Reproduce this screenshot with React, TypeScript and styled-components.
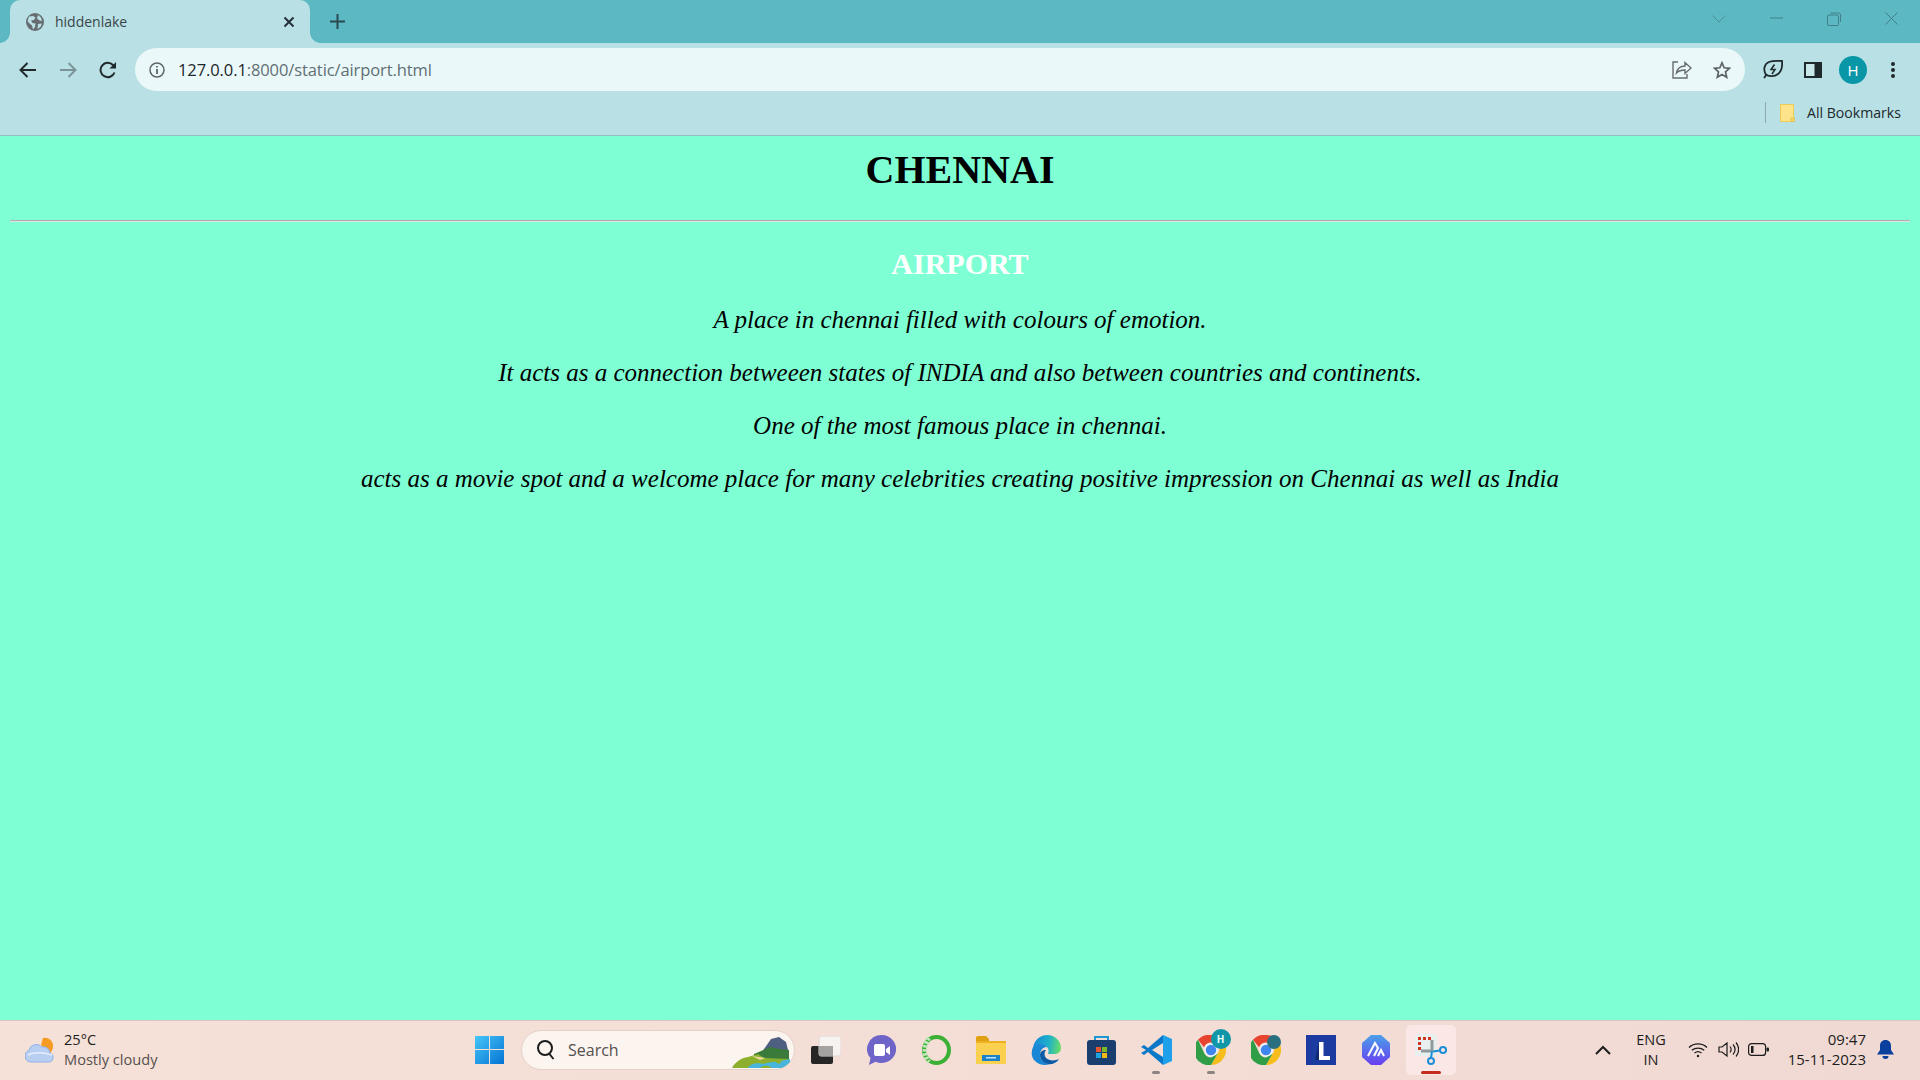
import React from "react";
import styled, { createGlobalStyle } from "styled-components";

const GlobalStyle = createGlobalStyle`
  html, body { margin: 0; padding: 0; height: 100%; overflow: hidden; }
  #root { height: 100%; }
`;

const UI_FONT = `"Open Sans", "Noto Sans", Arial, sans-serif`;

const Screen = styled.div`
  display: flex;
  flex-direction: column;
  width: 1920px;
  height: 1080px;
  font-family: ${UI_FONT};
`;

/* ---------- browser chrome ---------- */
const TabStrip = styled.div`
  display: flex;
  align-items: stretch;
  height: 43px;
  background: #5cb8c2;
`;

const Tab = styled.div`
  position: relative;
  display: flex;
  align-items: center;
  width: 300px;
  margin-left: 10px;
  padding: 0 15px 0 16px;
  box-sizing: border-box;
  background: #b9e1e5;
  border-radius: 10px 10px 0 0;
  &::before, &::after {
    content: "";
    position: absolute;
    bottom: 0;
    width: 10px;
    height: 10px;
  }
  &::before {
    left: -10px;
    background: radial-gradient(circle at 0 0, transparent 9.5px, #b9e1e5 10px);
  }
  &::after {
    right: -10px;
    background: radial-gradient(circle at 100% 0, transparent 9.5px, #b9e1e5 10px);
  }
`;

const TabTitle = styled.span`
  flex: 1;
  margin-left: 11px;
  padding-bottom: 1px;
  font-size: 14px;
  color: #3a4548;
`;

const NewTab = styled.div`
  display: flex;
  align-items: center;
  margin-left: 20px;
`;

const WindowControls = styled.div`
  display: flex;
  margin-left: auto;
`;

const WindowButton = styled.div`
  display: flex;
  align-items: center;
  justify-content: center;
  width: ${(p: { $w?: number }) => p.$w ?? 57}px;
  padding-bottom: 6px;
`;

const Toolbar = styled.div`
  display: flex;
  align-items: center;
  height: 53px;
  padding: 0 9px 0 10px;
  background: #b9e1e5;
`;

const NavButton = styled.div<{ $flush?: boolean }>`
  display: flex;
  align-items: center;
  justify-content: center;
  width: 36px;
  height: 36px;
  margin-right: ${(p) => (p.$flush ? 0 : 4)}px;
`;

const Omnibox = styled.div`
  flex: 1;
  display: flex;
  align-items: center;
  height: 43px;
  margin-left: 5px;
  padding: 0 14px;
  background: #ebf8f9;
  border-radius: 22px;
`;

const Url = styled.div`
  flex: 1;
  margin-left: 13px;
  font-size: 16.5px;
  letter-spacing: -0.1px;
  color: #5f6f73;
  white-space: nowrap;
`;

const UrlHost = styled.span`
  color: #1d2629;
`;

const OmniActions = styled.div`
  display: flex;
  align-items: center;
  gap: 21px;
`;

const ToolbarRight = styled.div`
  display: flex;
  gap: 4px;
  margin-left: 10px;
`;

const Avatar = styled.div`
  display: flex;
  align-items: center;
  justify-content: center;
  width: 28px;
  height: 28px;
  border-radius: 50%;
  background: #0997a8;
  color: #fff;
  font-size: 15px;
`;

const BookmarkBar = styled.div`
  display: flex;
  align-items: center;
  justify-content: flex-end;
  height: 40px;
  padding: 0 19px 6px 0;
  box-sizing: border-box;
  background: #b9e1e5;
  border-bottom: 1px solid #95bcc4;
  color: #20282b;
  font-size: 14.1px;
`;

const BarDivider = styled.div`
  width: 1px;
  height: 21px;
  margin-right: 14px;
  background: #8fa9ae;
`;

const BookmarkLabel = styled.span`
  margin-left: 12px;
`;

/* ---------- page ---------- */
const Page = styled.main`
  flex: 1;
  padding: 11px 10px 0;
  background: #7fffd4;
  font-family: "Liberation Serif", "Times New Roman", serif;
  text-align: center;
  color: #000;
`;

const Title = styled.h1`
  margin: 0 0 27px;
  font-size: 40px;
  font-weight: bold;
  line-height: 46px;
`;

const Rule = styled.hr`
  margin: 0;
  height: 0;
  border: 0;
  border-top: 1px solid #b5a9ab;
  border-bottom: 1px solid #d5e8dd;
`;

const Subtitle = styled.h2`
  margin: 25px 0;
  font-size: 30px;
  font-weight: bold;
  line-height: 34px;
  color: #fff;
`;

const Line = styled.p`
  margin: 25px 0;
  font-size: 25px;
  font-style: italic;
  line-height: 28px;
`;

/* ---------- taskbar ---------- */
const Taskbar = styled.footer`
  display: flex;
  align-items: center;
  height: 60px;
  padding-bottom: 2px;
  box-sizing: border-box;
  border-top: 1px solid #d8c8c0;
  background: linear-gradient(90deg, #f6e1d8 0%, #f3ddd5 60%, #f0d9d3 100%);
  color: #1d1d1d;
`;

const Weather = styled.div`
  display: flex;
  align-items: center;
  width: 466px;
  padding-left: 25px;
  box-sizing: border-box;
`;

const WeatherText = styled.div`
  margin: 0 0 2px 9px;
  font-size: 14.6px;
  line-height: 20px;
`;

const WeatherNote = styled.div`
  color: #55504e;
`;

const StartCell = styled.div`
  display: flex;
  justify-content: center;
  width: 46px;
`;

const SearchBox = styled.div`
  position: relative;
  display: flex;
  align-items: center;
  width: 274px;
  height: 40px;
  margin-left: 9px;
  padding-left: 14px;
  box-sizing: border-box;
  background: #fbf4ef;
  border: 1px solid #e3d1ca;
  border-radius: 20px;
  overflow: hidden;
  color: #55504e;
  font-size: 16px;
`;

const SearchLabel = styled.span`
  margin-left: 12px;
`;

const SearchArt = styled.svg`
  position: absolute;
  right: 2px;
  bottom: 1px;
`;

const Apps = styled.div`
  display: flex;
  margin-left: 3.5px;
`;

const AppCell = styled.div<{ $active?: boolean; $dot?: boolean }>`
  position: relative;
  display: flex;
  align-items: center;
  justify-content: center;
  width: 55px;
  height: 50px;
  ${(p) => p.$active && `
    width: 50px;
    margin: 0 2.5px;
    background: #fbe7e5;
    border-radius: 5px;
  `}
  &::after {
    content: "";
    position: absolute;
    bottom: 1px;
    left: 50%;
    display: ${(p) => (p.$active || p.$dot ? "block" : "none")};
    width: ${(p) => (p.$active ? 20 : 8)}px;
    height: 3px;
    border-radius: 2px;
    transform: translateX(-50%);
    background: ${(p) => (p.$active ? "#c42b1c" : "#8a8583")};
  }
`;

const ChromeBadge = styled.span<{ $globe?: boolean }>`
  position: absolute;
  top: ${(p) => (p.$globe ? 10 : 4)}px;
  right: ${(p) => (p.$globe ? 13 : 8)}px;
  display: flex;
  align-items: center;
  justify-content: center;
  width: ${(p) => (p.$globe ? 14 : 20)}px;
  height: ${(p) => (p.$globe ? 14 : 20)}px;
  border-radius: 50%;
  background: ${(p) => (p.$globe ? "#2a6f80" : "#0f97a8")};
  color: #e8ffff;
  font-size: 10px;
  font-weight: 700;
`;

const Tray = styled.div`
  display: flex;
  align-items: center;
  margin-left: auto;
  padding-right: 19px;
`;

const TrayCell = styled.div<{ $w: number }>`
  display: flex;
  align-items: center;
  justify-content: center;
  width: ${(p) => p.$w}px;
`;

const Lang = styled.div`
  width: 50px;
  margin-left: 5px;
  margin-right: 7px;
  text-align: center;
  font-size: 14.5px;
  line-height: 20px;
`;

const Clock = styled.div`
  width: 93px;
  margin: 0 4px 2px 0;
  text-align: right;
  font-size: 15px;
  line-height: 20px;
  white-space: nowrap;
`;

/* ---------- drawings ---------- */
const Globe = () => (
  <svg width="18" height="18" viewBox="0 0 18 18">
    <circle cx="9" cy="9" r="9" fill="#676c70" />
    <path d="M3 3.500 7 3l2.500 1.500L8 7 5 7.500 6.500 10l3 .5L9 14l-2 2.500-1-4-3-2.500-1.500-2zM12 2l3 2.500L16 8l-2.500-.5L11 5.500zM12 11l4-.5-1.500 3.500-3 2z" fill="#b9e1e5" />
  </svg>
);

const Stroke = ({ w, h, d, c, sw = 2 }: { w: number; h: number; d: string; c: string; sw?: number }) => (
  <svg width={w} height={h} viewBox={`0 0 ${w} ${h}`} fill="none" stroke={c} strokeWidth={sw}>
    <path d={d} />
  </svg>
);

const ChromeLogo = ({ size = 30 }: { size?: number }) => (
  <svg width={size} height={size} viewBox="0 0 30 30">
    <path d="M15 0a15 15 0 0 1 13 7.500H15a7.500 7.500 0 0 0-7 4.800L2 4.800A15 15 0 0 1 15 0z" fill="#e8432f" />
    <path d="M28 7.500A15 15 0 0 1 15 30l6.500-11.200A7.500 7.500 0 0 0 20 7.500z" fill="#f7bd1c" />
    <path d="M15 30A15 15 0 0 1 2 4.800l6.500 14A7.500 7.500 0 0 0 15 22.500l6.500-3.700z" fill="#2f9e47" />
    <circle cx="15" cy="15" r="6" fill="#3f86ee" stroke="#f0f4f6" strokeWidth="1.500" />
  </svg>
);

const Icons = {
  start: (
    <svg width="29" height="29" viewBox="0 0 29 29">
      <defs>
        <linearGradient id="win" x1="0" y1="0" x2="1" y2="1">
          <stop offset="0" stopColor="#45c6f7" />
          <stop offset="1" stopColor="#0573d4" />
        </linearGradient>
      </defs>
      <path d="M0 1h14v13H0zM15 1h14v13H15zM0 15h14v14H0zM15 15h14v14H15z" fill="url(#win)" />
    </svg>
  ),
  weather: (
    <svg width="30" height="26" viewBox="0 0 30 26">
      <path d="M18 1a8 8 0 0 1 10 8c0 3-1 5-3 7l-9-8z" fill="#f59b23" />
      <path d="M6 25a6 6 0 0 1-2-11.600A7.500 7.500 0 0 1 17 10a6.500 6.500 0 0 1 8 6 4.800 4.800 0 0 1 0 9z" fill="#b9cff2" stroke="#8fb1e6" />
      <path d="M3 18c6-3 14-3 24 0" fill="none" stroke="#e5edfb" strokeWidth="1.500" />
    </svg>
  ),
  search: (
    <svg width="20" height="22" viewBox="0 0 20 22" fill="none" stroke="#1c1c1c" strokeWidth="2">
      <circle cx="9" cy="9" r="7" />
      <path d="m13.500 15 4 5" />
    </svg>
  ),
  landscape: (
    <SearchArt width="62" height="32" viewBox="0 0 62 32">
      <path d="M32 16 41 3l8-2 7 5 3 12z" fill="#4f5f80" />
      <path d="M24 18 40 11l10 2 9 1v10H24z" fill="#3a7a3a" />
      <path d="M2 32c3-6 9-10 16-11l10-3 6 4 26 1v9z" fill="#8cb02e" />
      <path d="M22 20l14 2-6 2z" fill="#e9d9a0" />
      <path d="M18 32c2-4 8-6 16-4 4-2 14-2 26-5v9z" fill="#47b5dd" />
      <path d="M30 32c3-3 8-3 12 0zM44 25h8l-3 3z" fill="#8cb02e" />
    </SearchArt>
  ),
  taskview: (
    <svg width="30" height="28" viewBox="0 0 30 28">
      <rect x="0" y="10" width="22" height="18" rx="2" fill="#262626" />
      <rect x="8" y="0" width="22" height="20" rx="2" fill="#f6f3f1" stroke="#ded7d3" />
      <rect x="8" y="10" width="14" height="10" fill="#a5a3a2" />
    </svg>
  ),
  chat: (
    <svg width="29" height="30" viewBox="0 0 29 30">
      <path d="M14.500 0a14.500 14 0 1 1-6 26.700L2 30l1.500-7A14.500 14 0 0 1 14.500 0z" fill="#6f64c8" />
      <rect x="7" y="9" width="11" height="12" rx="2" fill="#fff" />
      <path d="m19 14 4-3v9l-4-3z" fill="#fff" />
    </svg>
  ),
  ring: (
    <svg width="31" height="30" viewBox="0 0 31 30" fill="none">
      <ellipse cx="15.500" cy="15" rx="12.500" ry="13" stroke="#3cb034" strokeWidth="4" />
      <path d="M8 3C3 9 2 20 8 27" stroke="#c4e6bd" strokeWidth="4.500" strokeDasharray="2.500 1.500" />
    </svg>
  ),
  folder: (
    <svg width="30" height="28" viewBox="0 0 30 28">
      <path d="M0 2a2 2 0 0 1 2-2h8l3 3h0v4H0z" fill="#e0a010" />
      <path d="M0 5h30v23H0z" fill="#fbd04e" />
      <path d="M0 5h30v2H0z" fill="#eab120" />
      <path d="M6 19h18v6H6z" fill="#1a82c9" />
      <path d="M10 21h10v1.500H10z" fill="#bfe3f5" />
    </svg>
  ),
  edge: (
    <svg width="30" height="30" viewBox="0 0 30 30">
      <defs>
        <linearGradient id="edgeTop" x1="0" y1="0.500" x2="1" y2="0.600">
          <stop offset="0" stopColor="#1288d8" />
          <stop offset="0.550" stopColor="#1fb2c8" />
          <stop offset="1" stopColor="#6bdc66" />
        </linearGradient>
      </defs>
      <path d="M2 12C4 4 10 0 16 0c8 0 14 6 14 13 0 4-3 6-7 6h-6c2-5-1-8-5-9-4-1-8 0-10 2z" fill="url(#edgeTop)" />
      <path d="M2 12c-2 5-2 10 2 14 4 4 10 5 15 3-4 0-10-3-10-9 0-5 3-8 7-8-4-4-11-4-14 0z" fill="#1a86d6" />
      <path d="M9 20c0 6 6 10 12 9 3-1 5-2 7-5-4 2-10 2-13-1-2-2-2-6 0-8-4 0-6 2-6 5z" fill="#0b5aa5" />
    </svg>
  ),
  store: (
    <svg width="29" height="30" viewBox="0 0 29 30">
      <path d="M8 6V2h13v4" fill="none" stroke="#1d9ad6" strokeWidth="2" />
      <rect x="0" y="5" width="29" height="25" rx="3" fill="#1a3f6f" />
      <rect x="9" y="12" width="5" height="5" fill="#e8552d" />
      <rect x="15" y="12" width="5" height="5" fill="#7bb82a" />
      <rect x="9" y="18" width="5" height="5" fill="#1fa3e0" />
      <rect x="15" y="18" width="5" height="5" fill="#f7b917" />
    </svg>
  ),
  vscode: (
    <svg width="31" height="30" viewBox="0 0 31 30">
      <path d="M22 0 31 4v22l-9 4z" fill="#1fa0ea" />
      <path d="M22 0v8L11 15l11 7v8L7 17l-4 3-3-2 5-3-5-3 3-2 4 3z" fill="#0a78c8" />
    </svg>
  ),
  l: (
    <svg width="30" height="30" viewBox="0 0 30 30">
      <rect width="30" height="30" fill="#1c3ba0" />
      <path d="M9 25 13 7v18z" fill="#142a70" />
      <path d="M13 7h4.500v14H24v4H13z" fill="#fff" />
    </svg>
  ),
  hex: (
    <svg width="28" height="30" viewBox="0 0 28 30">
      <defs>
        <linearGradient id="hexFill" x1="0" y1="0" x2="0" y2="1">
          <stop offset="0" stopColor="#4aa0ea" />
          <stop offset="1" stopColor="#6a3df0" />
        </linearGradient>
      </defs>
      <path d="M9 0h10l9 8v14l-9 8H9l-9-8V8z" fill="url(#hexFill)" />
      <path d="M6 21 13 8l3 5-4 8M16 21l3-6 3 6" fill="none" stroke="#fff" strokeWidth="2" />
    </svg>
  ),
  snip: (
    <svg width="32" height="36" viewBox="0 0 32 36" fill="none">
      <rect x="0" y="2" width="22" height="22" rx="3" fill="#e9eeee" />
      <path d="M3 5h3v3H3zM8 5h3v3H8zM13 5h3v3h-3zM3 10h3v3H3zM3 15h3v3H3z" fill="#d0341f" />
      <path d="M17 8v11M6 19h11" stroke="#8e9a9c" strokeWidth="3" />
      <path d="m17 19-1 7.500M18 19.500l7-1" stroke="#1c8ed6" strokeWidth="2" />
      <circle cx="16" cy="29" r="3" stroke="#1c8ed6" strokeWidth="2" />
      <circle cx="28" cy="18" r="3" stroke="#1c8ed6" strokeWidth="2" />
    </svg>
  ),
  chevronUp: <Stroke w={16} h={10} d="m1 9 7-7 7 7" c="#1d1d1d" />,
  wifi: (
    <svg width="20" height="16" viewBox="0 0 20 16" fill="none" stroke="#1d1d1d" strokeWidth="1.300">
      <path d="M1 5.500c5-4.800 13-4.800 18 0M3.800 8.300c3.500-3 9-3 12.400 0M6.500 11c2-1.600 5-1.600 7 0" />
      <circle cx="10" cy="14" r="1.200" fill="#1d1d1d" stroke="none" />
    </svg>
  ),
  volume: (
    <svg width="21" height="17" viewBox="0 0 21 17" fill="none" stroke="#1d1d1d" strokeWidth="1.200">
      <path d="M1 6h3l5-4v13l-5-4H1zM12 5.500c1.500 2 1.500 4 0 6M15 3.500c2.500 3 2.500 7 0 10M18 1.500c3.500 4 3.500 10 0 14" />
    </svg>
  ),
  battery: (
    <svg width="21" height="13" viewBox="0 0 21 13" fill="none">
      <rect x=".6" y=".6" width="17" height="11.800" rx="3" stroke="#1d1d1d" strokeWidth="1.200" />
      <rect x="3" y="3" width="2.500" height="7" fill="#1d1d1d" />
      <rect x="18.500" y="4.500" width="2.500" height="4" rx="1" fill="#1d1d1d" />
    </svg>
  ),
  bell: (
    <svg width="17" height="19" viewBox="0 0 17 19">
      <path d="M8.500 0C5 0 3 2.500 3 6v4l-3 4.500h17L14 10V6c0-3.500-2-6-5.500-6z" fill="#0b3f9e" />
      <path d="M5.500 16h6a3 3 0 0 1-6 0z" fill="#0b3f9e" />
    </svg>
  ),
};

const App = () => {
  return (
    <Screen>
      <GlobalStyle />
      <TabStrip>
        <Tab>
          <Globe />
          <TabTitle>hiddenlake</TabTitle>
          <Stroke w={12} h={12} d="m1.500 1.500 9 9m0-9-9 9" c="#25303a" />
        </Tab>
        <NewTab>
          <Stroke w={15} h={15} d="M7.500 0v15M0 7.500h15" c="#2a4a52" />
        </NewTab>
        <WindowControls>
          <WindowButton $w={58}>
            <Stroke w={14} h={8} d="m.5.500 6.500 6.500 6.500-6.500" c="#4d8f99" sw={1} />
          </WindowButton>
          <WindowButton>
            <Stroke w={13} h={3} d="M0 1h13" c="#41808a" sw={1} />
          </WindowButton>
          <WindowButton>
            <Stroke w={14} h={14} d="M.5 4.500a1.500 1.500 0 0 1 1.500-1.500h8a1.500 1.500 0 0 1 1.500 1.500v8a1 1 0 0 1-1 1H2a1.500 1.500 0 0 1-1.500-1.500zM3.500 1h8a2 2 0 0 1 2 2v7" c="#41808a" sw={1} />
          </WindowButton>
          <WindowButton $w={58}>
            <Stroke w={13} h={13} d="m.5.500 12 12m0-12-12 12" c="#41808a" sw={1} />
          </WindowButton>
        </WindowControls>
      </TabStrip>
      <Toolbar>
        <NavButton>
          <Stroke w={18} h={16} d="M17 8H2m6.500-7L1.500 8l7 7" c="#20292c" />
        </NavButton>
        <NavButton>
          <Stroke w={18} h={16} d="M1 8h15M9.500 1l7 7-7 7" c="#7b9499" />
        </NavButton>
        <NavButton>
          <svg width="18" height="18" viewBox="0 0 18 18" fill="none">
            <path d="M15.500 11.500A7.200 7.200 0 1 1 14 4l1.500 1.500" stroke="#20292c" strokeWidth="2" />
            <path d="M17 1v6.500h-6.500z" fill="#20292c" />
          </svg>
        </NavButton>
        <Omnibox>
          <svg width="16" height="16" viewBox="0 0 16 16" fill="none" stroke="#5d6468" strokeWidth="1.500">
            <circle cx="8" cy="8" r="7" />
            <path d="M8 7v5M8 4v1.500" strokeWidth="1.800" />
          </svg>
          <Url>
            <UrlHost>127.0.0.1</UrlHost>:8000/static/airport.html
          </Url>
          <OmniActions>
            <svg width="20" height="19" viewBox="0 0 20 19" fill="none" stroke="#666c70" strokeWidth="1.400">
              <path d="M6 2H1v16h14v-4" />
              <path d="M4.500 13c1-5 4.500-7 8.500-7V2.500L19 8l-6 5.500V10c-3.500 0-6.500 1-8.500 3z" />
            </svg>
            <svg width="18" height="18" viewBox="0 0 18 18" fill="none" stroke="#5d6468" strokeWidth="1.700">
              <path d="m9 1.800 2.200 5 5.300.5-4 3.600 1.200 5.300L9 13.400l-4.700 2.800 1.200-5.300-4-3.600 5.300-.5z" />
            </svg>
          </OmniActions>
        </Omnibox>
        <ToolbarRight>
          <NavButton $flush>
            <svg width="20" height="19" viewBox="0 0 20 19" fill="none" stroke="#20292c" strokeWidth="1.800">
              <path d="M3 15C0 10 1 4 6 2c4-1.500 9-1 13-1 .5 5 0 10-4 13-3 2.500-8 2.500-12 1z" />
              <path d="m1 18 3-4" />
              <path d="M11.500 4.500 8 9.500h4l-3 4.500" strokeWidth="1.500" />
            </svg>
          </NavButton>
          <NavButton $flush>
            <svg width="18" height="16" viewBox="0 0 18 16">
              <rect width="18" height="16" fill="#20292c" />
              <rect x="2" y="2" width="8.500" height="12" fill="#c9e8ea" />
            </svg>
          </NavButton>
          <NavButton $flush>
            <Avatar>H</Avatar>
          </NavButton>
          <NavButton $flush>
            <svg width="4" height="16" viewBox="0 0 4 16" fill="#20292c">
              <circle cx="2" cy="2" r="2" />
              <circle cx="2" cy="8" r="2" />
              <circle cx="2" cy="14" r="2" />
            </svg>
          </NavButton>
        </ToolbarRight>
      </Toolbar>
      <BookmarkBar>
        <BarDivider />
        <svg width="15" height="18" viewBox="0 0 15 18">
          <path d="M.5.500h13v17H.5z" fill="#fde48a" stroke="#eccb57" />
          <path d="M11 14h3.500v3.500H11z" fill="#f7d765" stroke="#e2bd48" strokeWidth=".8" />
        </svg>
        <BookmarkLabel>All Bookmarks</BookmarkLabel>
      </BookmarkBar>
      <Page>
        <Title>CHENNAI</Title>
        <Rule />
        <Subtitle>AIRPORT</Subtitle>
        <Line>A place in chennai filled with colours of emotion.</Line>
        <Line>It acts as a connection betweeen states of INDIA and also between countries and continents.</Line>
        <Line>One of the most famous place in chennai.</Line>
        <Line>acts as a movie spot and a welcome place for many celebrities creating positive impression on Chennai as well as India</Line>
      </Page>
      <Taskbar>
        <Weather>
          {Icons.weather}
          <WeatherText>
            <div>25°C</div>
            <WeatherNote>Mostly cloudy</WeatherNote>
          </WeatherText>
        </Weather>
        <StartCell>{Icons.start}</StartCell>
        <SearchBox>
          {Icons.search}
          <SearchLabel>Search</SearchLabel>
          {Icons.landscape}
        </SearchBox>
        <Apps>
          <AppCell>{Icons.taskview}</AppCell>
          <AppCell>{Icons.chat}</AppCell>
          <AppCell>{Icons.ring}</AppCell>
          <AppCell>{Icons.folder}</AppCell>
          <AppCell>{Icons.edge}</AppCell>
          <AppCell>{Icons.store}</AppCell>
          <AppCell $dot>{Icons.vscode}</AppCell>
          <AppCell $dot>
            <ChromeLogo />
            <ChromeBadge>H</ChromeBadge>
          </AppCell>
          <AppCell>
            <ChromeLogo />
            <ChromeBadge $globe />
          </AppCell>
          <AppCell>{Icons.l}</AppCell>
          <AppCell>{Icons.hex}</AppCell>
          <AppCell $active>{Icons.snip}</AppCell>
        </Apps>
        <Tray>
          <TrayCell $w={36}>{Icons.chevronUp}</TrayCell>
          <Lang>
            ENG
            <br />
            IN
          </Lang>
          <TrayCell $w={30}>{Icons.wifi}</TrayCell>
          <TrayCell $w={30}>{Icons.volume}</TrayCell>
          <TrayCell $w={30}>{Icons.battery}</TrayCell>
          <Clock>
            09:47
            <br />
            15-11-2023
          </Clock>
          <TrayCell $w={31}>{Icons.bell}</TrayCell>
        </Tray>
      </Taskbar>
    </Screen>
  );
};

export default App;
